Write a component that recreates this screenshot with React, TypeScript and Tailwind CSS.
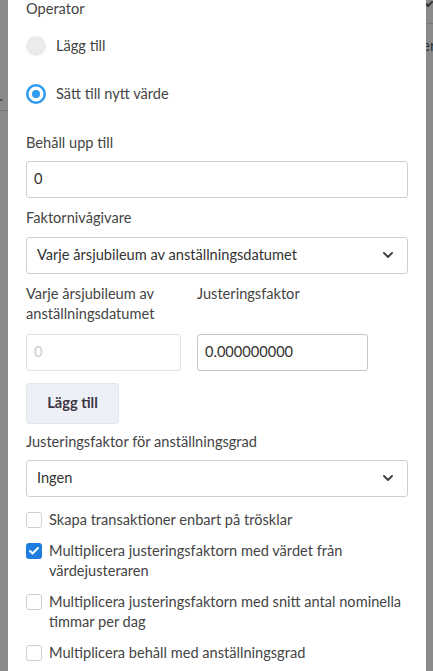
import { ChevronDown, Check } from 'lucide-react';

const font = { fontFamily: 'Lato, "Noto Sans", sans-serif' };

function Radio({ label, checked }: { label: string; checked?: boolean }) {
  return (
    <label className="flex h-[48px] items-center gap-[10px]">
      <svg width="20" height="20" viewBox="0 0 20 20" className="shrink-0">
        {checked ? (
          <>
            <circle cx="10" cy="10" r="8.75" fill="#fff" stroke="#2d9bf0" strokeWidth="2.5" />
            <circle cx="10" cy="10" r="4" fill="#2d9bf0" />
          </>
        ) : (
          <circle cx="10" cy="10" r="10" fill="#ebebeb" />
        )}
      </svg>
      <span className="text-[14.6px] text-[#444]">{label}</span>
    </label>
  );
}

function Select({ value }: { value: string }) {
  return (
    <div className="flex h-[37px] items-center justify-between rounded-[3px] border border-[#cfcfcf] pl-[10px] pr-[11px]">
      <span className="text-[14.6px] text-[#333]">{value}</span>
      <ChevronDown className="h-4 w-4 text-[#444]" strokeWidth={3} />
    </div>
  );
}

function CheckRow({ label, checked }: { label: string; checked?: boolean }) {
  return (
    <label className="flex items-start gap-[7px] py-[5px]">
      {checked ? (
        <span className="mt-[2px] flex h-[16px] w-[16px] shrink-0 items-center justify-center rounded-[3px] bg-[#1f7de0]">
          <Check className="h-3 w-3 text-white" strokeWidth={4} />
        </span>
      ) : (
        <span className="mt-[2px] h-[16px] w-[16px] shrink-0 rounded-[3px] border border-[#cfcfcf] bg-white" />
      )}
      <span className="text-[14.6px] leading-[20px] text-[#444]">{label}</span>
    </label>
  );
}

export default function App() {
  return (
    <div className="flex h-[671px] w-[433px] overflow-hidden bg-[#8a8a8a]" style={font}>
      <div className="relative w-[8px] shrink-0 overflow-hidden">
        <div className="absolute left-0 top-[110px] h-px w-full bg-[#777]" />
        <span className="absolute left-[-3px] top-[92px] text-[15px] leading-[18px] text-[#333]">r</span>
      </div>
      <div className="w-[418px] shrink-0 bg-white px-[18px] pb-4">
        <div className="text-[14.6px] leading-[18px] text-[#444]">Operator</div>
        <div className="mt-[4px]">
          <Radio label="Lägg till" />
          <Radio label="Sätt till nytt värde" checked />
        </div>

        <div className="mt-[14px] text-[14.6px] text-[#444]">Behåll upp till</div>
        <div className="mt-[7px] flex h-[37px] items-center rounded-[3px] border border-[#cfcfcf] px-[7px] text-[14.6px] text-[#333]">
          0
        </div>

        <div className="mt-[9px] text-[14.6px] text-[#444]">Faktornivågivare</div>
        <div className="mt-[8px]">
          <Select value="Varje årsjubileum av anställningsdatumet" />
        </div>

        <div className="mt-[10px] flex gap-[16px]">
          <div className="w-[155px]">
            <div className="h-[40px] text-[14.6px] leading-[20px] text-[#444]">
              Varje årsjubileum av anställningsdatumet
            </div>
            <div className="mt-[10px] flex h-[37px] items-center rounded-[3px] border border-[#e2e2e2] px-[7px] text-[14.6px] text-[#ccc]">
              0
            </div>
          </div>
          <div className="w-[171px]">
            <div className="h-[40px] text-[14.6px] leading-[20px] text-[#444]">Justeringsfaktor</div>
            <div className="mt-[10px] flex h-[37px] items-center rounded-[3px] border border-[#c4c4c4] px-[7px] text-[14.6px] text-[#333]">
              0.000000000
            </div>
          </div>
        </div>

        <button
          type="button"
          className="mt-[12px] h-[41px] w-[93px] rounded-[3px] border border-[#e3e5ee] bg-[#eef0f8] text-[14.6px] font-bold text-[#3d3540]"
        >
          Lägg till
        </button>

        <div className="mt-[7px] text-[14.6px] text-[#444]">Justeringsfaktor för anställningsgrad</div>
        <div className="mt-[7px]">
          <Select value="Ingen" />
        </div>

        <div className="mt-[8px] flex flex-col gap-[1px]">
          <CheckRow label="Skapa transaktioner enbart på trösklar" />
          <CheckRow label="Multiplicera justeringsfaktorn med värdet från värdejusteraren" checked />
          <CheckRow label="Multiplicera justeringsfaktorn med snitt antal nominella timmar per dag" />
          <CheckRow label="Multiplicera behåll med anställningsgrad" />
        </div>
      </div>
      <div className="relative flex-1 overflow-hidden">
        <ChevronDown className="absolute left-[-6px] top-[-4px] h-4 w-4 text-[#333]" strokeWidth={3} />
        <div className="absolute left-0 top-[23px] h-px w-full bg-[#777]" />
        <span className="absolute left-[-4px] top-[36px] text-[15px] leading-[18px] text-[#333]">er</span>
      </div>
    </div>
  );
}
